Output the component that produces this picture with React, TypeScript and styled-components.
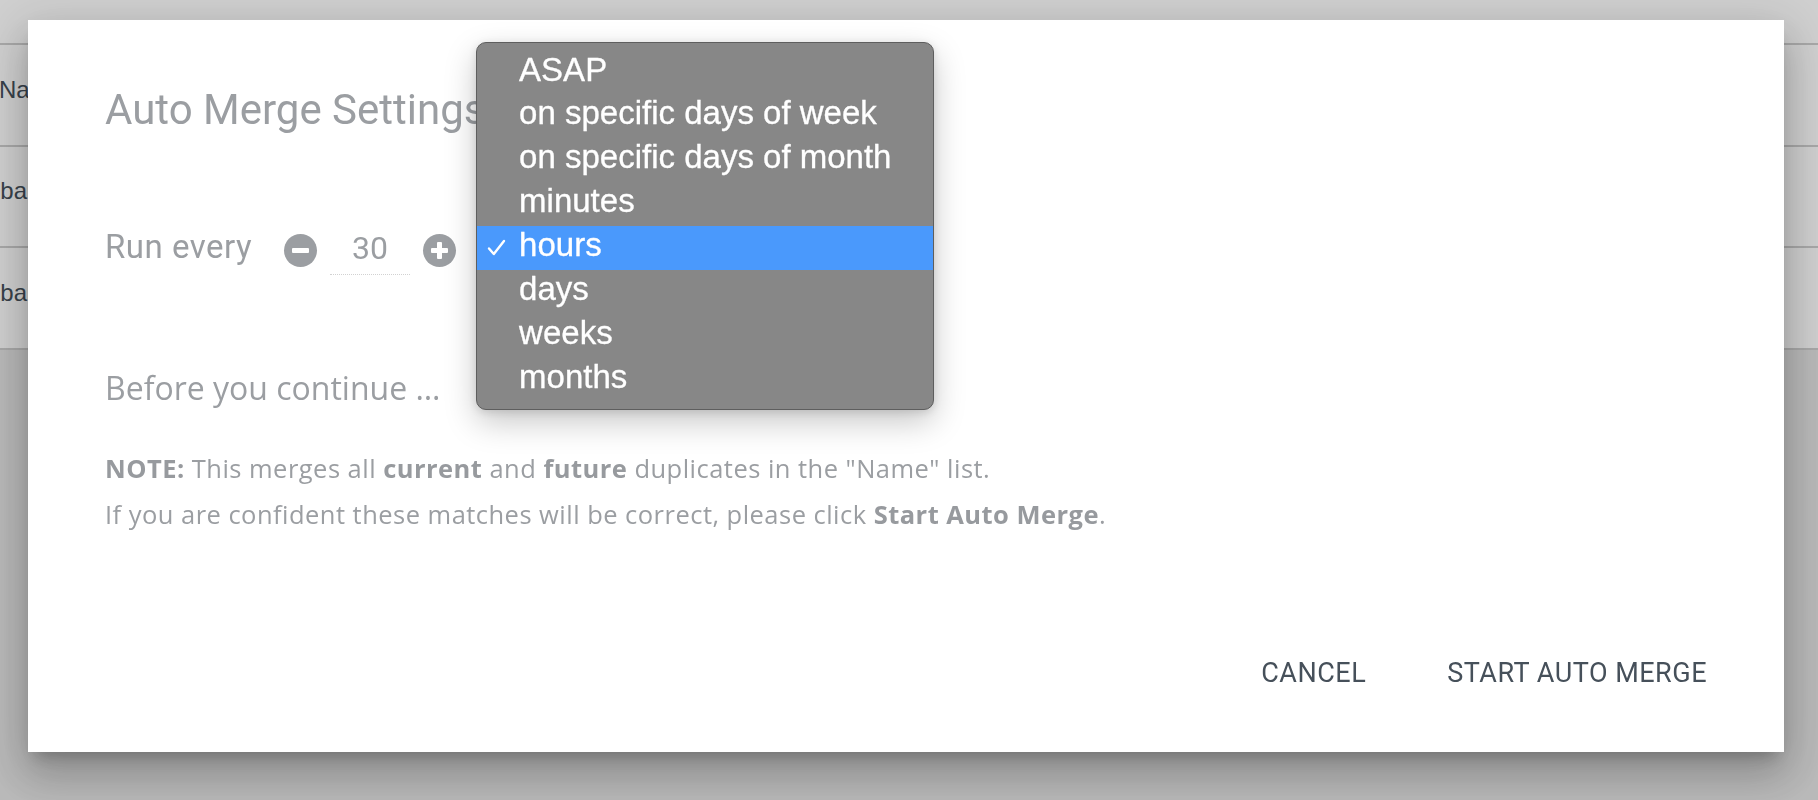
import React from 'react';
import styled, { createGlobalStyle } from 'styled-components';

const GlobalStyle = createGlobalStyle`
  html, body {
    margin: 0;
    padding: 0;
    width: 1818px;
    height: 800px;
    overflow: hidden;
    background: #e4e4e4;
    font-family: Roboto, "Liberation Sans", sans-serif;
  }
  * { box-sizing: border-box; }
`;

// page behind the modal
const Page = styled.div`
  width: 1818px;
  height: 800px;
  background: #e4e4e4;
`;

const Table = styled.div`
  background: #ffffff;
`;

const HeaderRow = styled.div`
  height: 45px;
  border-bottom: 2px solid #cfcfcf;
`;

const Row = styled.div`
  height: 101.5px;
  border-bottom: 2px solid #cfcfcf;
  display: flex;
  align-items: center;
  padding-bottom: 10px;
  overflow: hidden;
`;

const Cell = styled.span<{ $shift: number }>`
  margin-left: ${(p) => p.$shift}px;
  font-family: "Liberation Sans", Arial, sans-serif;
  font-size: 24px;
  color: #45505b;
  white-space: nowrap;
`;

const Backdrop = styled.div`
  position: fixed;
  inset: 0;
  background: rgba(0, 0, 0, 0.19);
  padding: 20px 0 0 28px;
`;

const Dialog = styled.div`
  width: 1756px;
  height: 732px;
  background: #ffffff;
  display: flex;
  flex-direction: column;
  padding: 0 53px 49px 77px;
  box-shadow: 0 11px 15px -7px rgba(0, 0, 0, 0.22), 0 24px 38px 3px rgba(0, 0, 0, 0.16),
    0 9px 46px 8px rgba(0, 0, 0, 0.12);
`;

const Title = styled.h2`
  margin: 65px 0 0;
  font-family: Roboto, sans-serif;
  font-weight: 400;
  font-size: 42px;
  line-height: 50px;
  color: #9b9ea2;
`;

const RunRow = styled.div`
  margin-top: 95px;
  height: 40px;
  display: flex;
  align-items: center;
`;

const Label = styled.span`
  font-family: Roboto, sans-serif;
  font-size: 33px;
  letter-spacing: 0.5px;
  line-height: 40px;
  padding-bottom: 6px;
  color: #9b9ea2;
`;

const RoundButton = styled.button<{ $first?: boolean }>`
  margin-left: ${(p) => (p.$first ? '32px' : '0')};
  width: 33px;
  height: 33px;
  border: none;
  border-radius: 50%;
  background: #9b9ea2;
  padding: 0;
  display: flex;
  align-items: center;
  justify-content: center;
  cursor: pointer;
`;

const NumberField = styled.div`
  width: 80px;
  height: 50px;
  margin: 0 13px;
  border-bottom: 1px dotted #d2d2d2;
  display: flex;
  align-items: center;
  justify-content: center;
  font-family: Roboto, sans-serif;
  font-size: 32px;
  color: #9b9ea2;
  padding-bottom: 4px;
`;

const SelectWrap = styled.div`
  position: relative;
  margin-left: 20px;
  height: 40px;
  width: 300px;
`;

const SelectBox = styled.div`
  font-family: Roboto, sans-serif;
  font-size: 30px;
  color: #6b7076;
  line-height: 40px;
`;

const Menu = styled.ul`
  position: absolute;
  left: 0;
  top: -188px;
  width: 458px;
  margin: 0;
  padding: 7.5px 0;
  list-style: none;
  background: #878787;
  border: 1px solid #5e5e5e;
  border-radius: 10px;
  box-shadow: 0 12px 32px rgba(0, 0, 0, 0.22), 0 2px 8px rgba(0, 0, 0, 0.12);
  z-index: 10;
`;

const MenuItem = styled.li<{ $active?: boolean }>`
  position: relative;
  height: 43.86px;
  padding-left: 42px;
  font-family: "Liberation Sans", Arial, sans-serif;
  font-size: 33px;
  line-height: 37px;
  color: #ffffff;
  white-space: nowrap;
  -webkit-text-stroke: 0.3px #ffffff;
  background: ${(p) => (p.$active ? '#4a99fc' : 'transparent')};
`;

const Check = styled.svg`
  position: absolute;
  left: 10px;
  top: 13px;
`;

const Heading = styled.div`
  margin-top: 96px;
  font-family: "Open Sans", sans-serif;
  font-size: 32px;
  line-height: 44px;
  color: #9b9ea2;
`;

const Note = styled.p<{ $first?: boolean }>`
  margin: ${(p) => (p.$first ? '42px 0 0' : '14px 0 0')};
  font-family: "Open Sans", sans-serif;
  font-size: 25.5px;
  letter-spacing: 0.47px;
  line-height: 32px;
  color: #9b9ea2;

  b {
    font-weight: 700;
    color: #979a9e;
  }
`;

const Actions = styled.div`
  margin-top: auto;
  display: flex;
  justify-content: flex-end;
  gap: 33px;
`;

const ActionButton = styled.button`
  border: none;
  background: transparent;
  padding: 12px 24px;
  font-family: Roboto, sans-serif;
  font-size: 27px;
  line-height: 36px;
  letter-spacing: 0.5px;
  color: #46505a;
  cursor: pointer;
`;

const options = [
  'ASAP',
  'on specific days of week',
  'on specific days of month',
  'minutes',
  'hours',
  'days',
  'weeks',
  'months',
];

const Minus = () => (
  <svg width="17" height="5" viewBox="0 0 17 5">
    <rect x="0" y="0" width="17" height="5" rx="1" fill="#fff" />
  </svg>
);

const Plus = () => (
  <svg width="17" height="17" viewBox="0 0 17 17">
    <rect x="0" y="6" width="17" height="5" rx="1" fill="#fff" />
    <rect x="6" y="0" width="5" height="17" rx="1" fill="#fff" />
  </svg>
);

export default function App() {
  const selected = 'hours';

  return (
    <>
      <GlobalStyle />
      <Page>
        <Table>
          <HeaderRow />
          <Row>
            <Cell $shift={-1}>Name</Cell>
          </Row>
          <Row>
            <Cell $shift={-37}>Global</Cell>
          </Row>
          <Row>
            <Cell $shift={-37}>Global</Cell>
          </Row>
        </Table>
      </Page>

      <Backdrop>
        <Dialog>
          <Title>Auto Merge Settings</Title>

          <RunRow>
            <Label>Run every</Label>
            <RoundButton $first aria-label="decrease">
              <Minus />
            </RoundButton>
            <NumberField>30</NumberField>
            <RoundButton aria-label="increase">
              <Plus />
            </RoundButton>
            <SelectWrap>
              <SelectBox>{selected}</SelectBox>
              <Menu>
                {options.map((o) => (
                  <MenuItem key={o} $active={o === selected}>
                    {o === selected && (
                      <Check width="19" height="17" viewBox="0 0 19 17">
                        <polyline
                          points="2,9.5 6.8,15 17,2"
                          fill="none"
                          stroke="#fff"
                          strokeWidth="2.4"
                          strokeLinecap="round"
                          strokeLinejoin="round"
                        />
                      </Check>
                    )}
                    {o}
                  </MenuItem>
                ))}
              </Menu>
            </SelectWrap>
          </RunRow>

          <Heading>Before you continue …</Heading>

          <Note $first>
            <b>NOTE:</b> This merges all <b>current</b> and <b>future</b> duplicates in the "Name" list.
          </Note>
          <Note>
            If you are confident these matches will be correct, please click <b>Start Auto Merge</b>.
          </Note>

          <Actions>
            <ActionButton>CANCEL</ActionButton>
            <ActionButton>START AUTO MERGE</ActionButton>
          </Actions>
        </Dialog>
      </Backdrop>
    </>
  );
}
